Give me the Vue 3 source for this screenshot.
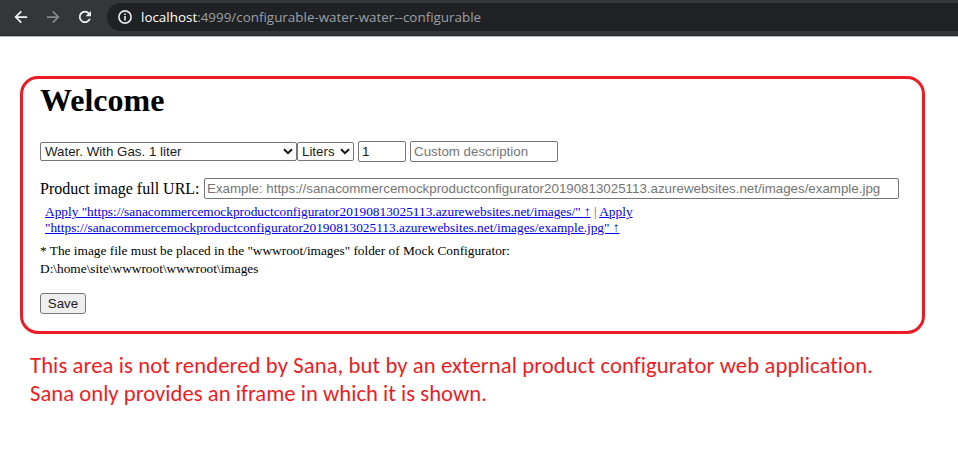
<script setup>
import { ref } from 'vue'

const host = 'https://sanacommercemockproductconfigurator20190813025113.azurewebsites.net/images/'
const product = ref('Water. With Gas. 1 liter')
const unit = ref('Liters')
const quantity = ref('1')
const description = ref('')
const imageUrl = ref('')
</script>

<template>
  <div class="page">
    <header class="toolbar">
      <svg class="nav" viewBox="0 0 16 16"><path d="M15 8H2.5M8.3 1.6 1.9 8l6.4 6.4" /></svg>
      <svg class="nav muted" viewBox="0 0 16 16"><path d="M1 8h12.5M7.7 1.6 14.1 8l-6.4 6.4" /></svg>
      <svg class="nav" viewBox="0 0 16 16"><path d="M13.6 10A6 6 0 1 1 12.5 4" /><path class="solid" d="M14.8 1v6.2H8.6z" /></svg>
      <div class="address">
        <svg class="info" viewBox="0 0 14 14"><circle cx="7" cy="7" r="6.1" /><path d="M7 6.1v4.4M7 3.4v1.7" /></svg>
        <span class="url"><span class="host">localhost</span><span class="path">:4999/configurable-water-water--configurable</span></span>
      </div>
    </header>

    <main class="frame">
      <h1>Welcome</h1>
      <div class="row">
        <div class="select product">
          <select v-model="product"><option>Water. With Gas. 1 liter</option></select>
          <svg class="chevron" viewBox="0 0 10 7"><path d="M1 1.3 5 5.1 9 1.3" /></svg>
        </div>
        <div class="select unit">
          <select v-model="unit"><option>Liters</option></select>
          <svg class="chevron" viewBox="0 0 10 7"><path d="M1 1.3 5 5.1 9 1.3" /></svg>
        </div>
        <input v-model="quantity" class="quantity">
        <input v-model="description" class="description" placeholder="Custom description">
      </div>
      <div class="row image-row">
        <label for="image">Product image full URL:</label>
        <input id="image" v-model="imageUrl" class="image" :placeholder="'Example: ' + host + 'example.jpg'">
      </div>
      <div class="links">
        <a href="#" @click.prevent="imageUrl = host">Apply "{{ host }}" <span class="up">↑</span></a> <span class="divider">|</span> <a href="#" @click.prevent="imageUrl = host + 'example.jpg'">Apply<br>"{{ host }}example.jpg" <span class="up">↑</span></a>
      </div>
      <p class="note">* The image file must be placed in the "wwwroot/images" folder of Mock Configurator:<br>D:\home\site\wwwroot\wwwroot\images</p>
      <button>Save</button>
    </main>

    <p class="caption">
      <span class="first">This area is not rendered by Sana, but by an external product configurator web application.</span><br>
      <span class="second">Sana only provides an iframe in which it is shown.</span>
    </p>
  </div>
</template>

<style>
body { margin: 0; background: #fff; overflow: hidden; }
</style>

<style scoped>
* { box-sizing: border-box; }
.page { height: 454px; overflow: hidden; color: #000; font-family: "Liberation Serif", serif; }
.toolbar {
  display: flex;
  align-items: center;
  height: 37px;
  padding: 0 0 3px 14px;
  background: #35363a;
  border-bottom: 1px solid #b5b5b6;
  box-shadow: inset 0 -1px #28292c;
}
.nav { width: 14px; height: 14px; margin-right: 18px; fill: none; stroke: #f1f3f4; stroke-width: 2; flex: none; }
.muted { stroke: #85868a; }
.nav .solid { fill: #f1f3f4; stroke: none; }
.address {
  display: flex;
  align-items: center;
  flex: 1;
  height: 28px;
  margin-left: -3px;
  padding-left: 11px;
  background: #202124;
  border-radius: 14px 0 0 14px;
}
.info { width: 14px; height: 14px; fill: none; stroke: #e8eaed; stroke-width: 1.6; }
.url { margin-left: 9px; font: 13.42px/20px "Open Sans", sans-serif; white-space: nowrap; }
.host { color: #fff; }
.path { color: #9aa0a6; }
.frame {
  width: 905px;
  height: 258px;
  margin: 39px 0 0 20px;
  padding: 3px 17px;
  border: 3px solid #ed1c24;
  border-radius: 18px;
}
h1 { margin: 0; font-size: 32px; line-height: 37px; }
.row { display: flex; align-items: center; height: 21px; margin-top: 22px; }
.select { display: flex; position: relative; height: 19px; }
.product { width: 257px; }
.unit { width: 57px; margin-right: 4px; }
select, input, button { margin: 0; border: 1px solid #767676; border-radius: 2px; font: 13.333px "Liberation Sans", sans-serif; }
select { width: 100%; height: 19px; padding: 0 4px; appearance: none; background: #fff; color: #1c1c1c; }
.chevron { position: absolute; right: 4px; top: 6px; width: 10px; height: 7px; fill: none; stroke: #111; stroke-width: 2; pointer-events: none; }
input { height: 21px; padding: 1px 3px; background: #fff; color: #1c1c1c; }
input::placeholder { color: #757575; opacity: 1; }
.quantity { width: 48px; margin-right: 4px; }
.description { width: 148px; }
.image-row { margin-top: 16px; }
label { width: 164px; font-size: 16px; line-height: 18px; white-space: nowrap; }
.image { width: 695px; padding-left: 2px; }
.links { margin: 5px 0 0 5px; font-size: 13.333px; line-height: 16px; white-space: nowrap; }
a { color: #0000ee; text-decoration: underline; }
.divider { color: #666; }
.note { margin: 6px 0 0; font-size: 13.333px; line-height: 18px; }
button { display: block; width: 46px; height: 21px; margin-top: 15px; padding: 0; background: #efefef; border-radius: 3px; color: #1c1c1c; }
.caption { margin: 17px 0 0 30px; color: #ed1c24; font: 22.67px/28px Carlito, Lato, sans-serif; font-variant-ligatures: none; white-space: nowrap; }
.first { letter-spacing: 0.09px; }
.second { letter-spacing: 0.02px; }
</style>
